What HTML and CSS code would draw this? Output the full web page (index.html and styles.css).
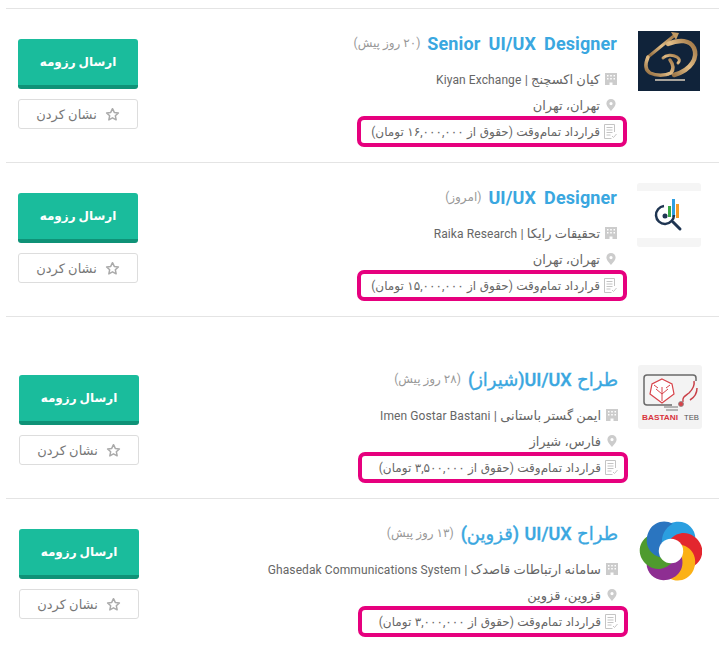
FILE: index.html
```html
<!DOCTYPE html>
<html lang="fa" dir="rtl">
<head>
  <meta charset="utf-8">
  <meta name="viewport" content="width=device-width, initial-scale=1.0">
  <link rel="stylesheet" href="styles.css">
</head>
<body>

<svg class="sprites" width="0" height="0">
  <defs>
    <linearGradient id="gold" x1="0" y1="1" x2="1" y2="0">
      <stop offset="0" stop-color="#8a6438"/>
      <stop offset="0.5" stop-color="#e2bd86"/>
      <stop offset="1" stop-color="#9a7040"/>
    </linearGradient>
  </defs>
  <symbol id="i-building" viewBox="0 0 12 12">
    <path fill-rule="evenodd" d="M0 0h12v12H7.500V9.500h-3V12H0zM2 2v1.500h1.500V2zm3.200 0v1.500h1.600V2zm3.300 0v1.500H10V2zM2 5v1.500h1.500V5zm3.200 0v1.500h1.600V5zm3.300 0v1.500H10V5z"/>
  </symbol>
  <symbol id="i-pin" viewBox="0 0 10 12">
    <path fill-rule="evenodd" d="M5 0a4.600 4.600 0 0 1 4.600 4.600C9.600 7.600 5 12 5 12S.4 7.600.4 4.600A4.600 4.600 0 0 1 5 0zm0 3a1.600 1.600 0 1 0 0 3.200A1.600 1.600 0 0 0 5 3z"/>
  </symbol>
  <symbol id="i-doc" viewBox="0 0 13 15">
    <path fill="none" stroke="currentColor" d="M10.500 8V.5h-10v14h7M2.500 3.500h6M2.500 6h6M2.500 8.500h6M2.500 11h4M8 12l1.500 1.500L12.500 10"/>
  </symbol>
  <symbol id="i-star" viewBox="0 0 16 16">
    <path fill="none" stroke="currentColor" stroke-width="1.600" stroke-linejoin="round" d="M8 1.800l1.900 4 4.400.5-3.300 3 .9 4.400L8 11.500l-3.900 2.200.9-4.400-3.300-3 4.400-.5z"/>
  </symbol>
  <symbol id="i-petal" viewBox="-32 -32 64 64">
    <path d="M-11-5C-16-20-5-31 8-31 18-31 26-23 26-13 18-18 8-17 2-12-3-9-8-7-11-5z"/>
  </symbol>
</svg>

<div class="job-list">

  <div class="job">
    <div class="logo">
      <svg viewBox="0 0 64 64" width="64" height="64">
        <rect x="1" y="2" width="62" height="60" fill="#10233a"/>
        <g fill="none" stroke="url(#gold)" stroke-linecap="round">
          <path d="M38 6 11 28" stroke-width="3"/>
          <path d="M31 15c12-5 22-4 26 4 4 9-2 22-20 27" stroke-width="4.500"/>
          <path d="M11 28c-3 7-3 13 2 16 6 3 15 3 21 0 3-4 2-9-1-13" stroke-width="3.500"/>
          <path d="M26 29c3-3 9-4 14-1 3 2 3 4 1 6" stroke-width="3"/>
        </g>
        <path d="M34 3l8 1-3 7z" fill="#c39a62"/>
        <rect x="29" y="44" width="3" height="2.500" fill="#d8b47e"/>
        <rect x="18" y="50" width="30" height="2" fill="#a7a39b"/>
      </svg>
    </div>
    <div class="info">
      <div class="title-row">
        <a class="title">Senior UI/UX Designer</a>
        <span class="age">(۲۰ روز پیش)</span>
      </div>
      <div class="meta company">
        <svg class="icon"><use href="#i-building"/></svg>
        <span>کیان اکسچنج | <span class="latin">Kiyan Exchange</span></span>
      </div>
      <div class="meta location">
        <svg class="icon"><use href="#i-pin"/></svg>
        <span>تهران، تهران</span>
      </div>
      <div class="contract">
        <svg class="icon-doc"><use href="#i-doc"/></svg>
        <span>قرارداد تمام‌وقت (حقوق از ۱۶,۰۰۰,۰۰۰ تومان)</span>
      </div>
    </div>
    <div class="actions">
      <button class="btn-send">ارسال رزومه</button>
      <button class="btn-mark"><svg class="icon-star"><use href="#i-star"/></svg> نشان کردن</button>
    </div>
  </div>

  <div class="job">
    <div class="logo">
      <svg viewBox="0 0 64 64" width="64" height="64">
        <rect width="64" height="64" rx="3" fill="#f5f5f5"/>
        <rect y="8" width="64" height="47" fill="#fff"/>
        <rect x="31" y="23" width="3" height="11" fill="#39a845"/>
        <rect x="35" y="16" width="3" height="18" fill="#2f9fe0"/>
        <rect x="39" y="21" width="3" height="14" fill="#f59a23"/>
        <path d="M27 23a9 9 0 1 0 10 9" fill="none" stroke="#1f3552" stroke-width="2.500"/>
        <circle cx="28" cy="33" r="2.500" fill="#1f3552"/>
        <path d="M36 39l7 7" stroke="#1f3552" stroke-width="3" stroke-linecap="round"/>
      </svg>
    </div>
    <div class="info">
      <div class="title-row">
        <a class="title">UI/UX Designer</a>
        <span class="age">(امروز)</span>
      </div>
      <div class="meta company">
        <svg class="icon"><use href="#i-building"/></svg>
        <span>تحقیقات رایکا | <span class="latin">Raika Research</span></span>
      </div>
      <div class="meta location">
        <svg class="icon"><use href="#i-pin"/></svg>
        <span>تهران، تهران</span>
      </div>
      <div class="contract">
        <svg class="icon-doc"><use href="#i-doc"/></svg>
        <span>قرارداد تمام‌وقت (حقوق از ۱۵,۰۰۰,۰۰۰ تومان)</span>
      </div>
    </div>
    <div class="actions">
      <button class="btn-send">ارسال رزومه</button>
      <button class="btn-mark"><svg class="icon-star"><use href="#i-star"/></svg> نشان کردن</button>
    </div>
  </div>

  <div class="job job-spaced">
    <div class="logo">
      <svg viewBox="0 0 64 64" width="64" height="64">
        <rect width="64" height="64" rx="3" fill="#f3f3f3"/>
        <path d="M34 40H9q-3 0-3-3V13q0-3 3-3h46q3 0 3 3v3" fill="none" stroke="#6a6a6a" stroke-width="1.500"/>
        <path d="M24 14l10 5 2 10-12 9-12-9 2-10z" fill="#fff" stroke="#d8434a" stroke-width="1.200"/>
        <path d="M24 36V22M24 29l-6-5M24 29l6-5M16 20l4 3M32 20l-4 3" stroke="#d8434a" fill="none"/>
        <path d="M56 16c1 5-1 8-5 12-4 3-7 4-6 9M59 23c0 5-2 9-7 12" fill="none" stroke="#c94048" stroke-width="1.500"/>
        <circle cx="43" cy="39" r="2.500" fill="#d8434a" stroke="#888" stroke-width=".8"/>
        <path d="M26 42h14M28 45h12" stroke="#777"/>
        <text class="logo-bastani" x="4" y="55" textLength="36" lengthAdjust="spacingAndGlyphs">BASTANI</text>
        <text class="logo-teb" x="46" y="55" textLength="15" lengthAdjust="spacingAndGlyphs">TEB</text>
      </svg>
    </div>
    <div class="info">
      <div class="title-row">
        <a class="title title-fa">طراح UI/UX(شیراز)</a>
        <span class="age">(۲۸ روز پیش)</span>
      </div>
      <div class="meta company">
        <svg class="icon"><use href="#i-building"/></svg>
        <span>ایمن گستر باستانی | <span class="latin">Imen Gostar Bastani</span></span>
      </div>
      <div class="meta location">
        <svg class="icon"><use href="#i-pin"/></svg>
        <span>فارس، شیراز</span>
      </div>
      <div class="contract">
        <svg class="icon-doc"><use href="#i-doc"/></svg>
        <span>قرارداد تمام‌وقت (حقوق از ۳,۵۰۰,۰۰۰ تومان)</span>
      </div>
    </div>
    <div class="actions">
      <button class="btn-send">ارسال رزومه</button>
      <button class="btn-mark"><svg class="icon-star"><use href="#i-star"/></svg> نشان کردن</button>
    </div>
  </div>

  <div class="job job-shifted">
    <div class="logo">
      <svg viewBox="0 0 64 64" width="64" height="64">
        <rect width="64" height="64" fill="#fff"/>
        <g transform="translate(33 32) scale(.94)">
          <use href="#i-petal" x="-32" y="-32" width="64" height="64" fill="#2b9fe0" transform="rotate(0)"/>
          <use href="#i-petal" x="-32" y="-32" width="64" height="64" fill="#e3262e" transform="rotate(60)"/>
          <use href="#i-petal" x="-32" y="-32" width="64" height="64" fill="#fbb116" transform="rotate(120)"/>
          <use href="#i-petal" x="-32" y="-32" width="64" height="64" fill="#8e2e92" transform="rotate(180)"/>
          <use href="#i-petal" x="-32" y="-32" width="64" height="64" fill="#4f9b2e" transform="rotate(240)"/>
          <use href="#i-petal" x="-32" y="-32" width="64" height="64" fill="#2a75c0" transform="rotate(300)"/>
          <circle r="13" fill="#fff"/>
        </g>
      </svg>
    </div>
    <div class="info">
      <div class="title-row">
        <a class="title title-fa">طراح UI/UX (قزوین)</a>
        <span class="age">(۱۳ روز پیش)</span>
      </div>
      <div class="meta company">
        <svg class="icon"><use href="#i-building"/></svg>
        <span>سامانه ارتباطات قاصدک | <span class="latin">Ghasedak Communications System</span></span>
      </div>
      <div class="meta location">
        <svg class="icon"><use href="#i-pin"/></svg>
        <span>قزوین، قزوین</span>
      </div>
      <div class="contract">
        <svg class="icon-doc"><use href="#i-doc"/></svg>
        <span>قرارداد تمام‌وقت (حقوق از ۳,۰۰۰,۰۰۰ تومان)</span>
      </div>
    </div>
    <div class="actions">
      <button class="btn-send">ارسال رزومه</button>
      <button class="btn-mark"><svg class="icon-star"><use href="#i-star"/></svg> نشان کردن</button>
    </div>
  </div>

</div>

</body>
</html>
```

FILE: styles.css
```css
html, body {
  height: 100%;
  overflow: hidden;
}

body {
  margin: 0;
  background: #fff;
  color: #666;
  font-family: 'Roboto', 'DejaVu Sans', sans-serif;
  font-size: 13px;
}

.sprites {
  display: block;
}

.job-list {
  padding: 8px 0 0 6px;
}

.job {
  display: flex;
  align-items: flex-start;
  height: 154px;
  box-sizing: border-box;
  padding: 22px 18px 0 12px;
  border-top: 1px solid #e4e4e4;
}

.job-spaced {
  height: 182px;
  padding-top: 50px;
  padding-left: 13px;
  padding-right: 17px;
}

.job-shifted {
  padding-left: 13px;
  padding-right: 17px;
}

.logo {
  width: 64px;
  height: 64px;
  flex: none;
  margin-top: -2px;
}

.logo svg {
  display: block;
  direction: ltr;
}

.logo-bastani {
  font: bold 8px 'Liberation Sans', sans-serif;
  fill: #d8343c;
}

.logo-teb {
  font: 8px 'Liberation Sans', sans-serif;
  fill: #555;
}

.info {
  flex: 1;
  padding-right: 20px;
  min-width: 0;
}

.title-row {
  display: flex;
  align-items: center;
  gap: 7px;
  height: 24px;
}

.title {
  color: #3aa7e0;
  font-size: 18px;
  font-weight: bold;
  letter-spacing: 0.100px;
  word-spacing: 3.500px;
  white-space: nowrap;
}

.title-fa {
  font-weight: 500;
  letter-spacing: 0;
  word-spacing: 1px;
  -webkit-text-stroke: 0.350px #3aa7e0;
}

.age {
  color: #999;
  font-size: 12px;
}

.meta {
  display: flex;
  align-items: center;
  gap: 5px;
  height: 26px;
  color: #666;
  white-space: nowrap;
}

.latin {
  font-size: 12px;
  letter-spacing: 0.100px;
}

.company {
  margin-top: 11px;
}

.icon {
  width: 12px;
  height: 12px;
  fill: #ccc;
  flex: none;
}

.contract {
  display: flex;
  align-items: center;
  gap: 4px;
  width: 270px;
  height: 31px;
  box-sizing: border-box;
  margin: -2px -10px 0 0;
  padding-right: 6px;
  border: 4px solid #e6007e;
  border-radius: 7px;
  color: #666;
  font-size: 12px;
  word-spacing: 0.500px;
  white-space: nowrap;
}

.icon-doc {
  width: 13px;
  height: 15px;
  color: #c4c4c4;
  flex: none;
}

.actions {
  display: flex;
  flex-direction: column;
  gap: 10px;
  width: 120px;
  flex: none;
  margin-top: 8px;
}

.actions button {
  width: 120px;
  font-family: inherit;
  padding: 0;
}

.btn-send {
  height: 50px;
  border: none;
  border-bottom: 4px solid #0f9277;
  border-radius: 3px;
  background: #1abc9c;
  color: #fff;
  font-size: 12px;
  font-weight: bold;
}

.btn-mark {
  display: flex;
  align-items: center;
  justify-content: center;
  gap: 8px;
  height: 30px;
  border: 1px solid #ddd;
  border-radius: 3px;
  background: #fff;
  color: #777;
  font-size: 13px;
}

.icon-star {
  width: 15px;
  height: 15px;
  color: #aaa;
}
```
